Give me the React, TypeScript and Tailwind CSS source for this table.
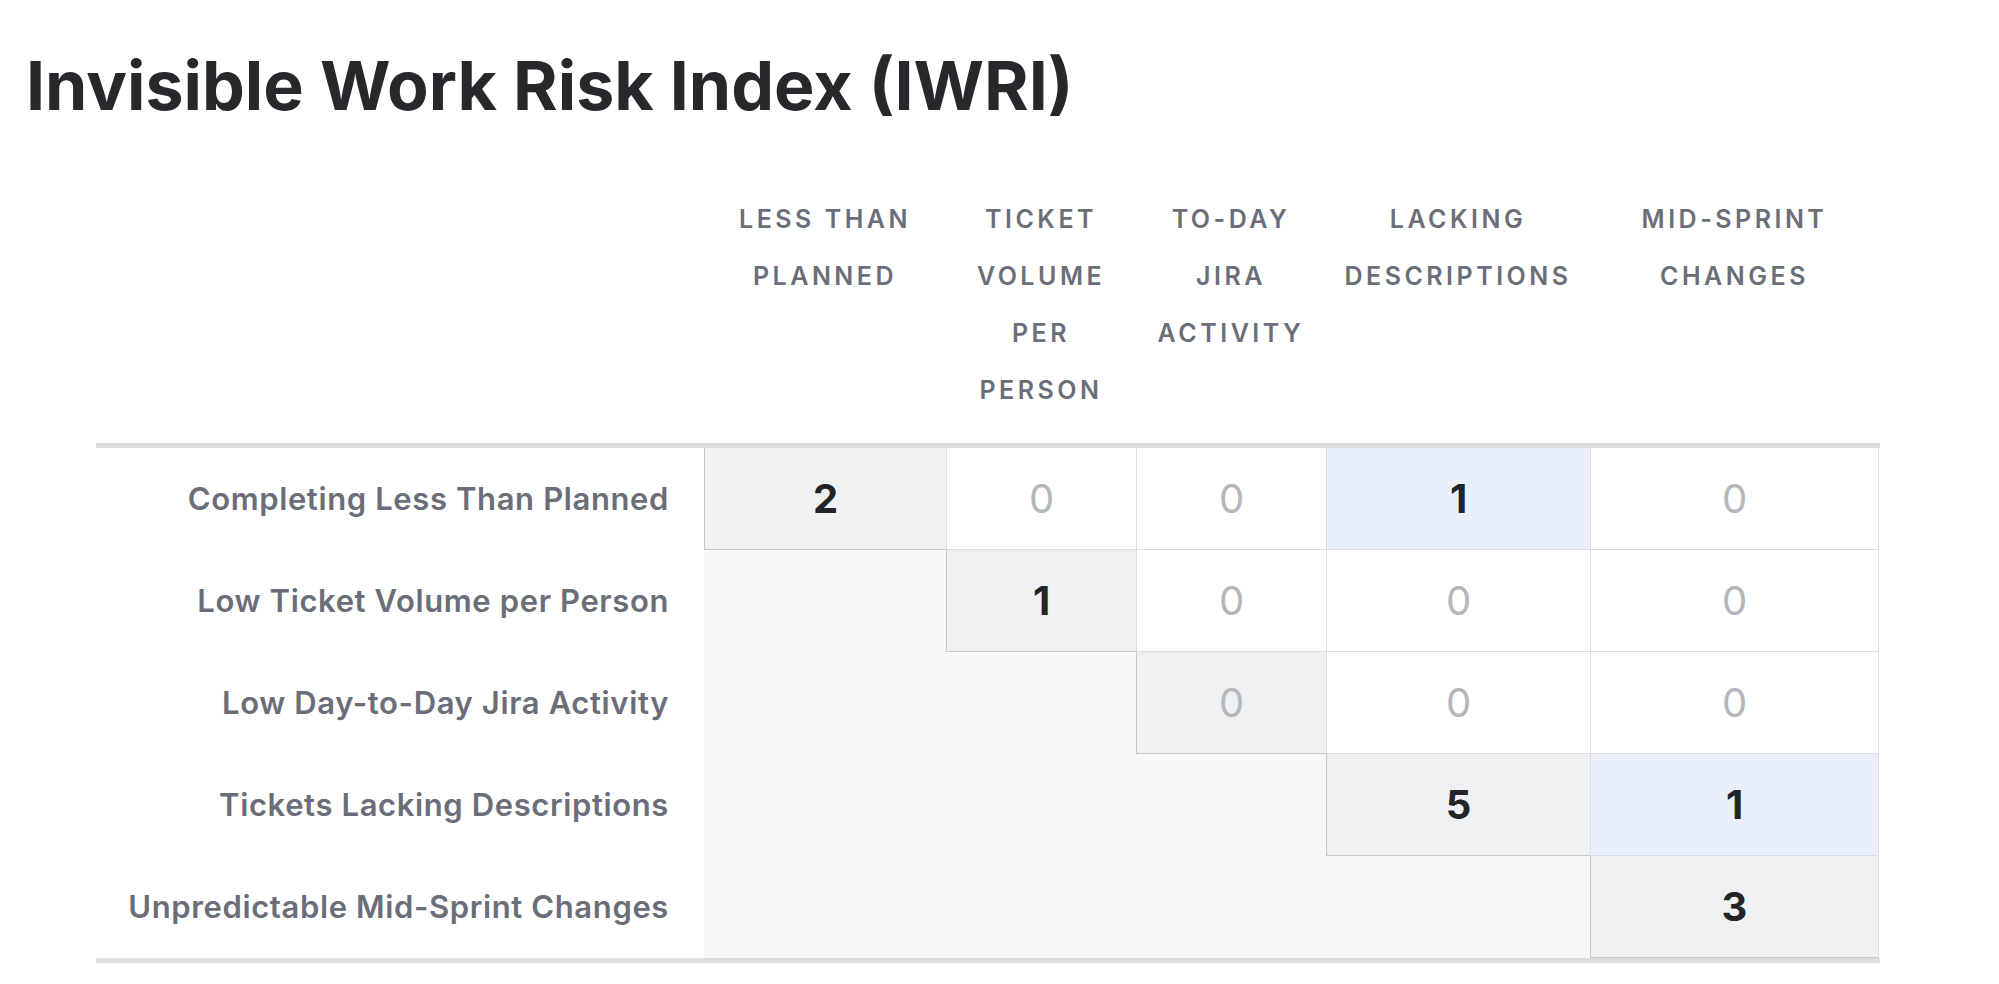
import React from "react";

const columns = [
  "LESS THAN PLANNED",
  "TICKET VOLUME PER PERSON",
  "TO-DAY JIRA ACTIVITY",
  "LACKING DESCRIPTIONS",
  "MID-SPRINT CHANGES",
];

const rows = [
  "Completing Less Than Planned",
  "Low Ticket Volume per Person",
  "Low Day-to-Day Jira Activity",
  "Tickets Lacking Descriptions",
  "Unpredictable Mid-Sprint Changes",
];

// upper triangle only, null = below diagonal
const matrix: (number | null)[][] = [
  [2, 0, 0, 1, 0],
  [null, 1, 0, 0, 0],
  [null, null, 0, 0, 0],
  [null, null, null, 5, 1],
  [null, null, null, null, 3],
];

const highlighted = new Set(["0-3", "3-4"]);

const gridCols = "grid grid-cols-[608px_242px_190px_190px_264px_289px]";

function Cell({ value, row, col }: { value: number | null; row: number; col: number }) {
  if (value === null) {
    return <div className="h-[102px] bg-[#f8f8f8]" />;
  }

  const isDiag = row === col;
  const isLastCol = col === columns.length - 1;
  const isBlue = highlighted.has(`${row}-${col}`);

  let cls = "h-[102px] flex items-center justify-center text-[40px] leading-none border-l border-b ";
  if (isDiag) cls += "bg-[#eff0f2] border-[#c6c7cb] ";
  else if (isBlue) cls += "bg-[#eaf0fb] border-[#dcdde0] ";
  else cls += "bg-white border-[#dcdde0] ";
  if (isLastCol) cls += "border-r border-r-[#dcdde0] ";

  return (
    <div className={cls}>
      <span className={value === 0 ? "font-normal text-[#b5b6ba]" : "font-bold text-[#232428]"}>
        {value}
      </span>
    </div>
  );
}

export default function App() {
  return (
    <div className="min-h-screen bg-white font-['Inter','Noto_Sans',sans-serif] pt-[51px]">
      <h1 className="pl-[26px] text-[68px] leading-[68px] font-bold text-[#27282c]">
        Invisible Work Risk Index (IWRI)
      </h1>

      <div className="ml-[96px] mt-[72px] w-[1784px]">
        {/* Column headers */}
        <div className={gridCols}>
          <div />
          {columns.map((c) => (
            <div
              key={c}
              className="px-3 pb-[24px] text-center text-[25px] leading-[57px] font-semibold tracking-[0.14em] text-[#6b6e78]"
            >
              {c}
            </div>
          ))}
        </div>

        {/* Matrix body */}
        <div className="border-y-[5px] border-[#dcdcdc]">
          {rows.map((label, r) => (
            <div key={label} className={gridCols}>
              <div className="h-[102px] flex items-center justify-end pr-[35px] bg-white text-[31px] tracking-[0.02em] font-semibold text-[#6b6e78]">
                {label}
              </div>
              {matrix[r].map((v, c) => (
                <Cell key={c} value={v} row={r} col={c} />
              ))}
            </div>
          ))}
        </div>
      </div>
    </div>
  );
}
